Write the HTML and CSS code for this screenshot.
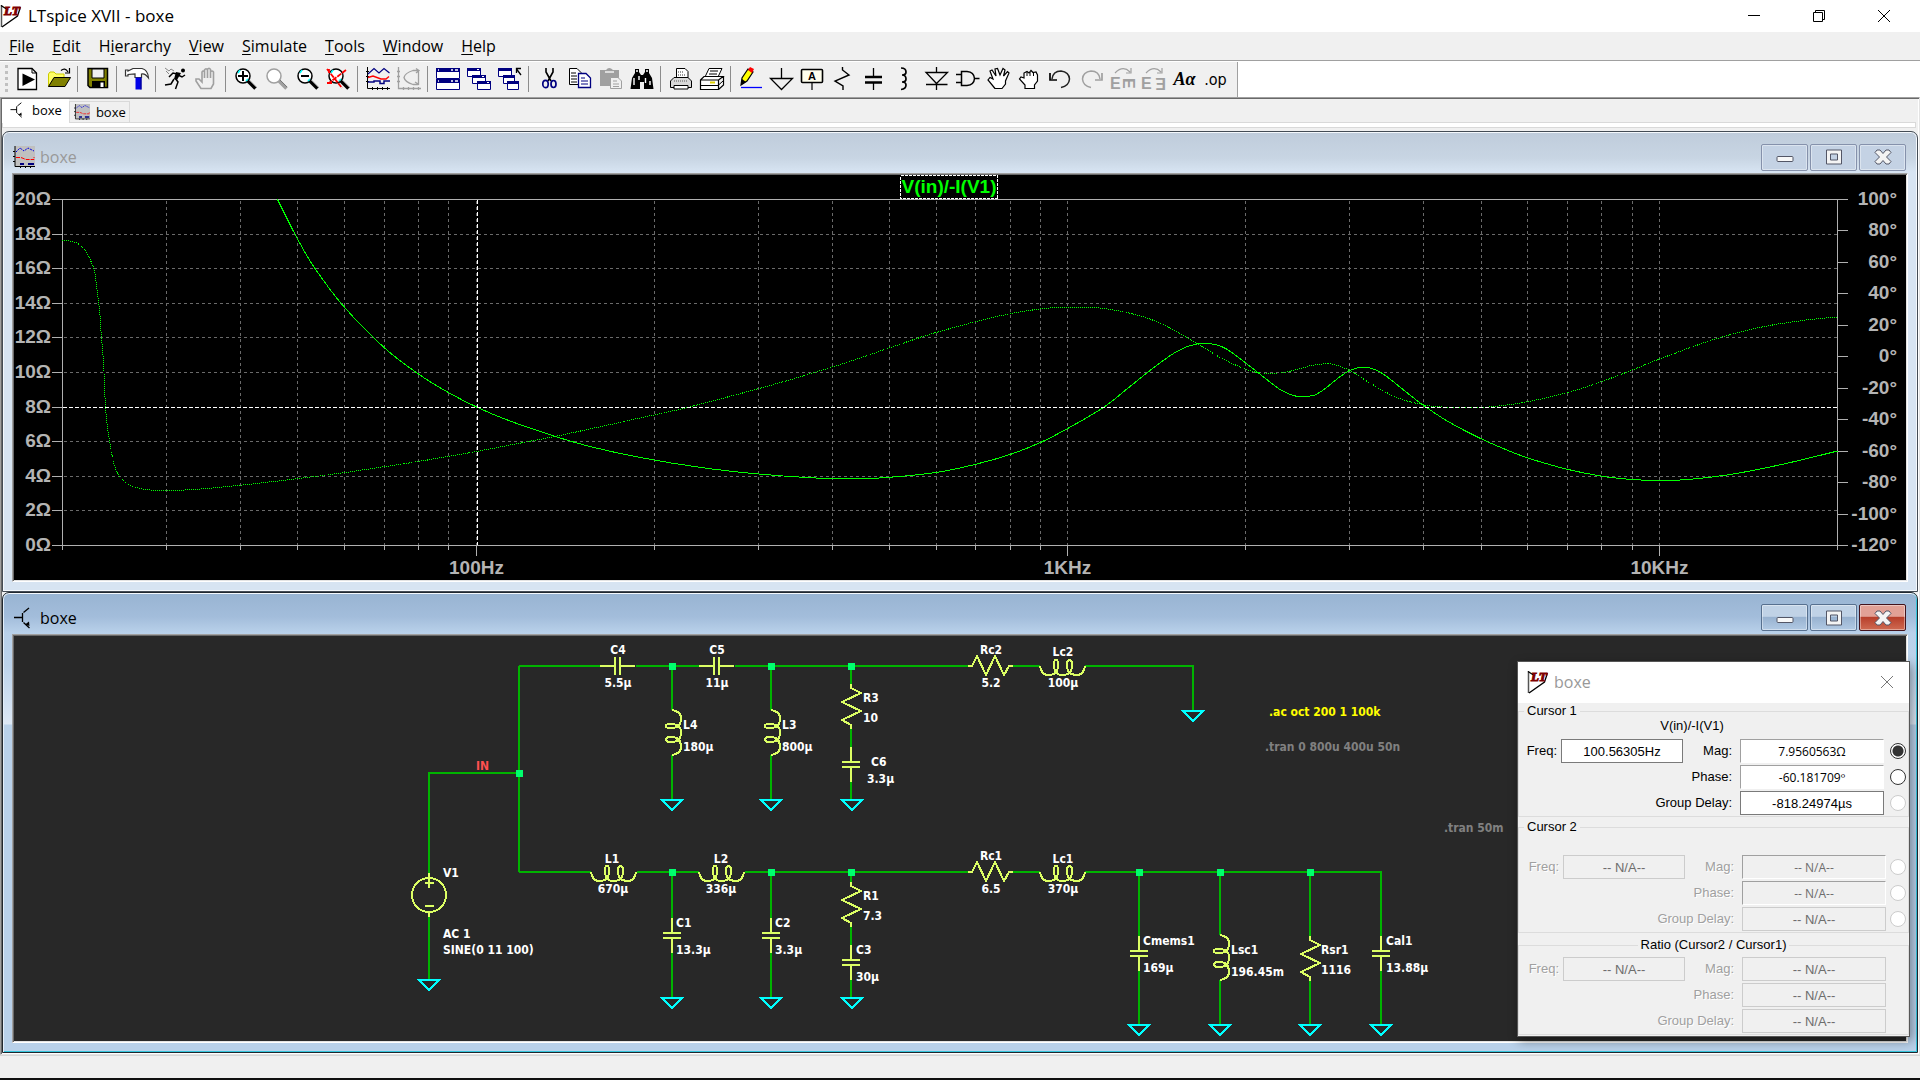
FILE: index.html
```html
<!DOCTYPE html>
<html lang="en">
<head>
<meta charset="utf-8">
<title>LTspice XVII - boxe</title>
<link rel="stylesheet" href="styles.css">
</head>
<body>
<svg class="defs" width="0" height="0" aria-hidden="true">
  <defs>
    <symbol id="logo" viewBox="0 0 22 24"><path d="M1.500 1V23" stroke="#555" stroke-width="1.500" fill="none"/><path d="M1 1.500L8 6M2 23L17.500 12L20.500 3" fill="none" stroke="#000" stroke-width="1.300"/><text x="4" y="11" class="logo-text">LT</text></symbol>
    <symbol id="bjt" viewBox="0 0 18 22"><path d="M0 10.500H9M8.500 6V15M9.500 5.500L15 1M9.500 15.500L15.500 21" fill="none" stroke="#000" stroke-width="1.300"/><path d="M11 17.500L15 14.500L15.500 19Z"/></symbol>
    <symbol id="wave" viewBox="0 0 22 22"><path d="M2 0H22V20H2Z" fill="#c0c0c0"/><path d="M2 0V20.500H22M0 5.500H2M0 10.500H2M0 15.500H2M7.500 20V22M12.500 20V22M17.500 20V22" fill="none" stroke="#000"/><path d="M3 6L7 2L11 5L15 2L21 5" fill="none" stroke="#0000e0" stroke-dasharray="2 1"/><path d="M3 11.500H8L13 13.500H21V11" fill="none" stroke="#f00" stroke-dasharray="4 1"/><path d="M7 18H11M15 18H21" stroke="#000080" stroke-width="2"/></symbol>
    <symbol id="g-min" viewBox="0 0 18 16"><rect x="1" y="7.500" width="16" height="5" rx="1" fill="#f8f8f8" stroke="#535666"/></symbol>
    <symbol id="g-max" viewBox="0 0 18 16"><path d="M1.500 1H16.500V15H1.500ZM5.500 5V11H12.500V5Z" fill="#f4f4f4" stroke="#535666" fill-rule="evenodd"/></symbol>
    <symbol id="g-close" viewBox="0 0 18 16"><path d="M3 1H6L9 4.500L12 1H15L17 3.500L12.500 8L17 12.500L15 15H12L9 11.500L6 15H3L1 12.500L5.500 8L1 3.500Z" fill="#f4f4f4" stroke="#535666"/></symbol>
    <symbol id="lens" viewBox="0 0 24 24"><circle cx="9" cy="9" r="7" fill="#fff" stroke="currentColor" stroke-width="1.500"/><path d="M14 14L21.500 21.500" stroke="currentColor" stroke-width="3.500"/><path d="M15 13L22 20" stroke="#777" stroke-width="1"/></symbol>
    <g id="cap"><path d="M0 0V15M0 20V35M-9 15H9M-9 20H9"/></g>
    <g id="res"><path d="M0 -1V3L10 8L-9 17L10 26L-9 35L0 40V44"/></g>
    <g id="coil"><path d="M0 0C1 6 4 9 8 9C14 9 18 7 18 -1C18 -8 14 -8 14 -1C14 6 17 9 22 9C28 9 32 7 32 -1C32 -8 27 -8 27 -1C27 7 32 9 37 9C41 9 44 6 45 0"/></g>
    <path id="gnd" d="M-10 0H10L0 10Z"/>
    <rect id="dot" x="-3" y="-3" width="7" height="7"/>
  </defs>
</svg>

<header class="titlebar">
  <svg class="app-logo" aria-hidden="true"><use href="#logo"/></svg>
  <h1>LTspice XVII - boxe</h1>
  <div class="sys">
    <button aria-label="Minimize"><svg viewBox="0 0 12 12"><path d="M0 5.500H12"/></svg></button>
    <button aria-label="Restore"><svg viewBox="0 0 12 12"><path d="M.5 2.500H9.500V11.500H.5ZM2.500 2V.5H11.500V9.500H10"/></svg></button>
    <button aria-label="Close"><svg viewBox="0 0 12 12"><path d="M0 0L12 12M12 0L0 12"/></svg></button>
  </div>
</header>

<nav class="menubar">
  <button><u>F</u>ile</button><button><u>E</u>dit</button><button>H<u>i</u>erarchy</button><button><u>V</u>iew</button><button><u>S</u>imulate</button><button><u>T</u>ools</button><button><u>W</u>indow</button><button><u>H</u>elp</button>
</nav>

<div class="toolrow">
  <div class="toolbar" role="toolbar" aria-label="Tools">
    <span class="grip"></span>
    <button aria-label="Run"><svg viewBox="0 0 24 24"><path d="M2 1.500H16L20.500 6V22.500H2Z" fill="#fff" stroke="#000" stroke-width="1.300"/><path d="M16 1.500V6H20.500" fill="none" stroke="#000"/><path d="M6.500 6.500L19 12.500L6.500 19Z"/></svg></button>
    <button aria-label="Open"><svg viewBox="0 0 24 24"><path d="M1.500 19.500V7L3 5H7L9 7H17V10.500H8Z" fill="#ff6" stroke="#cc0"/><path d="M1.500 19.500L7 10.500H23.500L18 19.500Z" fill="#808000" stroke="#000"/><path d="M14 3.500Q18 0 21 5M22.500 1V6H18" fill="none" stroke="#000" stroke-width="1.200"/></svg></button>
    <i></i>
    <button aria-label="Save"><svg viewBox="0 0 24 24"><path d="M2 1.500H21.500V20.500H4L2 18.500Z" fill="#808000" stroke="#000" stroke-width="1.500"/><path d="M6 2H18V11H6Z" fill="#f0f0f0" stroke="#000"/><path d="M6 14H19V21H6Z"/><path d="M14.500 15.500H17.500V20H14.500Z" fill="#fff"/></svg></button>
    <i></i>
    <button aria-label="Control panel"><svg viewBox="0 0 24 24"><path d="M.5 5.500V3H3V4L8 1.500H17Q23 3 23.500 11Q20 6 16.500 7V10.500H10V7L3 7.500V9H.5Z" fill="#fff" stroke="#333" stroke-width="1.200"/><path d="M10.500 10.500H16.500V22.500H10.500Z" fill="#0000e8"/><path d="M16 10.500V22.500" stroke="#000080"/></svg></button>
    <i></i>
    <button aria-label="Simulate"><svg viewBox="0 0 24 24"><path d="M13 7L9 6L5 10M14 8L18 10L21 8M11 11L14 15L11.500 22M10 12L7 17L1 18" fill="none" stroke="#000" stroke-width="1.500"/><path d="M12 5L17 6L13 13L10 12Z"/><circle cx="19" cy="3.500" r="2"/><path d="M1 1L5 4L7 2L10 4M2 4L5 7" fill="none" stroke="#888"/></svg></button>
    <button class="off" aria-label="Halt"><svg viewBox="0 0 24 24"><path d="M6 21.500L1 14V12H4L7 15V5Q8 3 9.500 5V11V3Q11 .5 12.500 3V11V2.500Q14 0 15.500 2.500V11V5Q17 3 18.500 5V17L16 21.500Z" fill="#f0f0f0" stroke="#a0a0a0" stroke-width="1.600"/></svg></button>
    <i></i>
    <button aria-label="Zoom in"><svg viewBox="0 0 24 24"><use href="#lens"/><path d="M4 9H14M9 4V14" stroke="#000" stroke-width="2"/><path d="M4 6L6 3M12 14L14 12" stroke="#0ff" stroke-width="1.500"/></svg></button>
    <button class="off" aria-label="Zoom back"><svg viewBox="0 0 24 24"><use href="#lens"/></svg></button>
    <button aria-label="Zoom out"><svg viewBox="0 0 24 24"><use href="#lens"/><path d="M5 9H13" stroke="#000" stroke-width="2"/><path d="M4 6L6 3M12 14L14 12" stroke="#0ff" stroke-width="1.500"/></svg></button>
    <button aria-label="Zoom full"><svg viewBox="0 0 24 24"><use href="#lens"/><path d="M4 6L6 3M12 14L14 12" stroke="#0ff" stroke-width="1.500"/><path d="M0 2L15 21M19 3L2 16M2 2V6M0 16H6" fill="none" stroke="#f00" stroke-width="1.800" stroke-dasharray="5 1"/></svg></button>
    <i></i>
    <button aria-label="Autorange"><svg viewBox="0 0 24 24"><path d="M1.500 0V21.500H24M0 4.500H3M0 9.500H3M0 14.500H3M6.500 20V23M11.500 20V23M16.500 20V23M21.500 20V23" fill="none" stroke="#000"/><path d="M2 7L8 1.500L13 6L18 1.500L23.500 6" fill="none" stroke="#000080" stroke-width="1.200"/><path d="M2 10.500L7 9L15 12H20L23 9.500" fill="none" stroke="#f00" stroke-width="1.400"/><path d="M2 15H8V14H14V16.500H18V14H24" fill="none" stroke="#000080" stroke-width="1.500"/></svg></button>
    <button class="off" aria-label="Pick traces"><svg viewBox="0 0 24 24"><path d="M1.500 0V21.500H24M0 4.500H3M0 9.500H3M0 14.500H3M6.500 20V23M11.500 20V23M16.500 20V23M21.500 20V23M21.500 3.500H16Q8 6 7 10.500Q8 15 16 17.500H21.500M19 1.500L22 3.500L19 6M21.500 3V18M18 15L22 17.500" fill="none" stroke="#a0a0a0" stroke-width="1.300"/></svg></button>
    <i></i>
    <button aria-label="Tile"><svg viewBox="0 0 24 24"><path d="M.5 1.500H23.500V11.500H.5ZM.5 12.500H23.500V22.500H.5Z" fill="#fff" stroke="#000080"/><path d="M0 1H24V5H0ZM0 12H24V16H0Z" fill="#000080"/><path d="M15 3H17M19 3H22M2 3H3M15 14H17M19 14H22M2 14H3" stroke="#fff" stroke-width="1.500"/></svg></button>
    <button aria-label="Cascade"><svg viewBox="0 0 24 24"><g fill="#fff" stroke="#000080"><path d="M.5 1.500H13.500V9.500H.5ZM5.500 8.500H18.500V16.500H5.500ZM10.500 14.500H23.500V22.500H10.500Z"/></g><path d="M0 1H14V4H0ZM5 8H19V11H5ZM10 14H24V17H10Z" fill="#000080"/><path d="M10 2.500H12M15 9.500H17M20 15.500H22" stroke="#fff"/></svg></button>
    <button aria-label="Close all"><svg viewBox="0 0 24 24"><g fill="#fff" stroke="#000080"><path d="M.5 1.500H13.500V9.500H.5ZM5.500 8.500H16.500V16.500H5.500ZM9.500 14.500H20.500V22.500H9.500Z"/></g><path d="M0 1H14V4H0ZM5 8H17V11H5ZM9 14H21V17H9Z" fill="#000080"/><path d="M23 8L18.500 2M18.500 6V1.500H23" fill="none" stroke="#000" stroke-width="1.300"/></svg></button>
    <i></i>
    <button aria-label="Cut"><svg viewBox="0 0 24 24"><path d="M9 1V5L14 14M16 1V5L11 14" fill="none" stroke="#000" stroke-width="1.600"/><ellipse cx="8.500" cy="17" rx="2.700" ry="3.700" fill="none" stroke="#000080" stroke-width="1.700"/><ellipse cx="16.500" cy="17" rx="2.500" ry="3.500" fill="none" stroke="#000080" stroke-width="1.700"/></svg></button>
    <button aria-label="Copy"><svg viewBox="0 0 24 24"><path d="M1.500 1.500H9L13 5.500V17.500H1.500Z" fill="#fff" stroke="#000"/><path d="M3 6H8M3 9H9M3 12H9M3 15H9" stroke="#000"/><path d="M10.500 6.500H18L22.500 11V20.500H10.500Z" fill="#fff" stroke="#000080" stroke-width="1.300"/><path d="M13 11H17M13 14H20M13 17H20" stroke="#000080"/></svg></button>
    <button class="off" aria-label="Paste"><svg viewBox="0 0 24 24"><path d="M1 3H7Q10 -1 14 3H20V19H1Z" fill="#a0a0a0"/><path d="M6 5H15" stroke="#f0f0f0" stroke-width="1.500"/><path d="M11.500 10.500H19L22.500 14V21.500H11.500Z" fill="#f0f0f0" stroke="#a0a0a0"/><path d="M14 14H18M14 17H20M14 19.500H20" stroke="#a0a0a0"/></svg></button>
    <button aria-label="Find"><svg viewBox="0 0 24 24"><path d="M5 2H9V5L11 8H13L15 5V2H19V6L22 11L23.500 22H14V15H10V22H.5L2 11L5 6Z"/><path d="M6 4H8M16 4H18M4 11V18M9 9V13M15.500 11V16M20 14V18" stroke="#fff" stroke-width="1.400"/></svg></button>
    <i></i>
    <button aria-label="Print"><svg viewBox="0 0 24 24"><path d="M7.500 12V1.500H16L19 4.500V12" fill="#fff" stroke="#000"/><path d="M1.500 14L5 10.500H19L22.500 14V20.500H1.500Z" fill="#d8d8d8" stroke="#000"/><path d="M5 18.500H19V22H5Z" fill="#fff" stroke="#000"/><path d="M9 5H15M9 8H17M5 14H19" stroke="#999" stroke-dasharray="1 1" stroke-width="2"/></svg></button>
    <button aria-label="Print setup"><svg viewBox="0 0 24 24"><path d="M5 10L9 1.500H22L18 10Z" fill="#fff" stroke="#000"/><path d="M10 4H18M9 7H17" stroke="#000"/><path d="M.5 13L4 9.500H23L18.500 13V22.500H.5ZM18.500 13H.5M18.500 22.500L23.500 18V9.500" fill="#fff" stroke="#000" stroke-width="1.200"/><path d="M1 18.500H18L23 14" fill="none" stroke="#000"/><path d="M10 15.500H15" stroke="#e0d000" stroke-width="2"/></svg></button>
    <i></i>
    <button aria-label="Wire"><svg viewBox="0 0 24 24"><path d="M2 18L3 11L9 2L14 5L8 14Z" fill="#ff0" stroke="#000" stroke-width="1.200"/><path d="M2 18L3 12L7 15Z"/><path d="M9 3L11 0L15 2L13 6Z" fill="#f00"/><path d="M2 20.500H23" stroke="#00f" stroke-width="1.300"/></svg></button>
    <button aria-label="Ground"><svg viewBox="0 0 24 24"><path d="M11.500 1V12M.5 11.500H22.500L11.500 22.500Z" fill="none" stroke="#000" stroke-width="1.300"/></svg></button>
    <button aria-label="Label net"><svg viewBox="0 0 24 24"><rect x="0.500" y="2.500" width="21" height="13" rx="1" fill="#ffe" stroke="#000" stroke-width="1.600"/><path d="M11 16V23" stroke="#000" stroke-width="1.200"/><text x="11" y="13" text-anchor="middle" class="ico-a">A</text></svg></button>
    <button aria-label="Resistor"><svg viewBox="0 0 24 24"><path d="M10.500 0V3L17 8L3 14L11 19V23" fill="none" stroke="#000" stroke-width="1.400"/></svg></button>
    <button aria-label="Capacitor"><svg viewBox="0 0 24 24"><path d="M10.500 1V10M10.500 15V23" stroke="#000" stroke-width="1.300"/><path d="M2 10H19M2 15.500H19" stroke="#000" stroke-width="2.400"/></svg></button>
    <button aria-label="Inductor"><svg viewBox="0 0 24 24"><path d="M7 1Q12 1 12 5Q12 8 8 8Q12 8 12 12Q12 15 8 15Q12 15 12 18Q12 22 7 22.500" fill="none" stroke="#000" stroke-width="1.700"/></svg></button>
    <button aria-label="Diode"><svg viewBox="0 0 24 24"><path d="M11.500 0V6M1 5.500H22.500L11.500 16.500ZM1 17.500H22.500M11.500 17V23" fill="none" stroke="#000" stroke-width="1.300"/></svg></button>
    <button aria-label="Component"><svg viewBox="0 0 24 24"><path d="M5.500 4.500H11Q18 5 18.500 11.500Q18 18 11 18.500H5.500ZM0 7.500H5M0 15.500H5M19 11.500H23.500" fill="none" stroke="#000" stroke-width="1.500"/></svg></button>
    <button aria-label="Move"><svg viewBox="0 0 24 24"><path d="M8 21.500L1 13L3 10.500L6 12L3 4L5 3L9 9L8 2L10.500 1.500L13 8L16 1.500L18 3L16.500 9L20.500 4.500L22 6L18.500 14V17L15 21.500Z" fill="#fff" stroke="#000" stroke-width="1.200"/></svg></button>
    <button aria-label="Drag"><svg viewBox="0 0 24 24"><path d="M7 21.500V18L1.500 12L3 10L6 11V6L9 4.500L11 6L13 3.500L15 5.500L18 5L19.500 8V14L16.500 18V21.500Z" fill="#fff" stroke="#000" stroke-width="1.200"/><path d="M9 5V9M12 5V9M15.500 6V9" stroke="#000"/></svg></button>
    <button aria-label="Undo"><svg viewBox="0 0 24 24"><path d="M3 12Q4 4 12 4Q20 5 20.500 12Q20 19 12 20.500" fill="none" stroke="#222" stroke-width="1.500"/><path d="M1 6V13H8" fill="none" stroke="#000" stroke-width="1.700"/></svg></button>
    <button class="off" aria-label="Redo"><svg viewBox="0 0 24 24"><path d="M20 12Q19 4 11 4Q3 5 2.500 12Q3 19 11 20.500" fill="none" stroke="#a0a0a0" stroke-width="1.500"/><path d="M22 6V13H15" fill="none" stroke="#a0a0a0" stroke-width="1.700"/></svg></button>
    <button class="off" aria-label="Rotate"><svg viewBox="0 0 24 24"><path d="M4 6Q12 -2 19 5M20 1V6H15" fill="none" stroke="#a0a0a0" stroke-width="1.200"/><text x="-1" y="22" class="ico-e">E</text><text class="ico-e" transform="translate(12 11) rotate(90)">E</text></svg></button>
    <button class="off" aria-label="Mirror"><svg viewBox="0 0 24 24"><path d="M4 6Q12 -2 19 5M20 1V6H15" fill="none" stroke="#a0a0a0" stroke-width="1.200"/><text x="-1" y="22" class="ico-e">E</text><text class="ico-e" transform="translate(24 11) rotate(180)">E</text></svg></button>
    <button class="tool-text serif">Aα</button>
    <button class="tool-text">.op</button>
  </div>
</div>

<main class="workspace">
  <div class="tabs" role="tablist">
    <button class="tab active" role="tab"><svg class="tab-icon" aria-hidden="true"><use href="#bjt"/></svg>boxe</button>
    <button class="tab" role="tab"><svg class="tab-icon" aria-hidden="true"><use href="#wave"/></svg>boxe</button>
  </div>
  <div class="tab-strip"></div>

  <section class="mdi">
    <div class="caption">
      <svg class="cap-icon" aria-hidden="true"><use href="#wave"/></svg><h2>boxe</h2>
      <div class="cap-buttons">
        <button aria-label="Minimize"><svg><use href="#g-min"/></svg></button>
        <button aria-label="Maximize"><svg><use href="#g-max"/></svg></button>
        <button aria-label="Close"><svg><use href="#g-close"/></svg></button>
      </div>
    </div>
    <div class="client plot">
      <svg id="plot" viewBox="14 175 1892 405" role="img" aria-label="V(in)/-I(V1) magnitude and phase">
        <path id="grid" class="grid"/>
        <path id="axes" class="axes"/>
        <path id="phase" class="trace dotted"/>
        <path id="mag" class="trace"/>
        <path class="cursor-line" d="M63 407.500H1837M477.500 200V545"/>
        <g id="labels" class="axis-text"></g>
        <rect class="trace-box" x="900.500" y="175.500" width="97" height="23"/>
        <text class="trace-name" x="949" y="193" text-anchor="middle">V(in)/-I(V1)</text>
      </svg>
    </div>
  </section>

  <section class="mdi current">
    <div class="caption">
      <svg class="cap-icon" aria-hidden="true"><use href="#bjt"/></svg><h2>boxe</h2>
      <div class="cap-buttons">
        <button aria-label="Minimize"><svg><use href="#g-min"/></svg></button>
        <button aria-label="Maximize"><svg><use href="#g-max"/></svg></button>
        <button class="close" aria-label="Close"><svg><use href="#g-close"/></svg></button>
      </div>
    </div>
    <div class="client schematic">
      <svg viewBox="14 636 1892 405" role="img" aria-label="Crossover schematic">
        <path class="wire" d="M429 873V773H519M519 666V872M429 917V979M519 666H600M636 666H699M735 666H968M1013 666H1040M1085 666H1193V710M519 872H591M637 872H699M745 872H968M1013 872H1040M1085 872H1381V936
          M672 666V710M672 755V799M771 666V710M771 755V799M851 666V685M851 729V747M851 782V799
          M672 872V918M672 953V998M771 872V918M771 953V998M851 872V883M851 926V945M851 980V998
          M1139 872V936M1139 971V1025M1220 872V935M1220 980V1025M1310 872V936M1310 980V1025M1381 971V1025"/>
        <g class="part">
          <circle cx="429" cy="895" r="17"/>
          <path d="M429 873V888M425 883H434M425 906H434M429 912V917"/>
          <use href="#cap" transform="translate(600 666) rotate(-90)"/>
          <use href="#cap" transform="translate(699 666) rotate(-90)"/>
          <use href="#cap" x="851" y="747"/><use href="#cap" x="672" y="918"/><use href="#cap" x="771" y="918"/>
          <use href="#cap" x="851" y="945"/><use href="#cap" x="1139" y="936"/><use href="#cap" x="1381" y="936"/>
          <use href="#res" x="851" y="685"/><use href="#res" x="851" y="883"/><use href="#res" x="1310" y="937"/>
          <use href="#res" transform="translate(969 666) rotate(-90)"/>
          <use href="#res" transform="translate(969 872) rotate(-90)"/>
          <use href="#coil" x="1040" y="666"/><use href="#coil" x="591" y="872"/><use href="#coil" x="699" y="872"/><use href="#coil" x="1040" y="872"/>
          <use href="#coil" transform="matrix(0 1 1 0 672 710)"/>
          <use href="#coil" transform="matrix(0 1 1 0 771 710)"/>
          <use href="#coil" transform="matrix(0 1 1 0 1220 935)"/>
        </g>
        <g class="ground">
          <use href="#gnd" x="429" y="980"/><use href="#gnd" x="672" y="800"/><use href="#gnd" x="771" y="800"/><use href="#gnd" x="852" y="800"/>
          <use href="#gnd" x="1193" y="711"/><use href="#gnd" x="672" y="998"/><use href="#gnd" x="771" y="998"/><use href="#gnd" x="852" y="998"/>
          <use href="#gnd" x="1139" y="1025"/><use href="#gnd" x="1220" y="1025"/><use href="#gnd" x="1310" y="1025"/><use href="#gnd" x="1381" y="1025"/>
        </g>
        <g class="node">
          <use href="#dot" x="519" y="773"/><use href="#dot" x="672" y="666"/><use href="#dot" x="771" y="666"/><use href="#dot" x="851" y="666"/>
          <use href="#dot" x="672" y="872"/><use href="#dot" x="771" y="872"/><use href="#dot" x="851" y="872"/>
          <use href="#dot" x="1139" y="872"/><use href="#dot" x="1220" y="872"/><use href="#dot" x="1310" y="872"/>
        </g>
        <g class="net mid">
          <text x="618" y="654">C4</text><text x="618" y="687">5.5µ</text>
          <text x="717" y="654">C5</text><text x="717" y="687">11µ</text>
          <text x="991" y="654">Rc2</text><text x="991" y="687">5.2</text>
          <text x="1063" y="656">Lc2</text><text x="1063" y="687">100µ</text>
          <text x="612" y="863">L1</text><text x="613" y="893">670µ</text>
          <text x="721" y="863">L2</text><text x="721" y="893">336µ</text>
          <text x="991" y="860">Rc1</text><text x="991" y="893">6.5</text>
          <text x="1063" y="863">Lc1</text><text x="1063" y="893">370µ</text>
        </g>
        <g class="net">
          <text x="683" y="729">L4</text><text x="683" y="751">180µ</text>
          <text x="782" y="729">L3</text><text x="782" y="751">800µ</text>
          <text x="863" y="702">R3</text><text x="863" y="722">10</text>
          <text x="871" y="766">C6</text><text x="867" y="783">3.3µ</text>
          <text x="676" y="927">C1</text><text x="676" y="954">13.3µ</text>
          <text x="775" y="927">C2</text><text x="775" y="954">3.3µ</text>
          <text x="863" y="900">R1</text><text x="863" y="920">7.3</text>
          <text x="856" y="954">C3</text><text x="856" y="981">30µ</text>
          <text x="1143" y="945">Cmems1</text><text x="1143" y="972">169µ</text>
          <text x="1231" y="954">Lsc1</text><text x="1231" y="976">196.45m</text>
          <text x="1321" y="954">Rsr1</text><text x="1321" y="974">1116</text>
          <text x="1386" y="945">Cal1</text><text x="1386" y="972">13.88µ</text>
          <text x="443" y="877">V1</text><text x="443" y="938">AC 1</text><text x="443" y="954">SINE(0 11 100)</text>
          <text x="476" y="770" class="net-name">IN</text>
          <text x="1269" y="716" class="directive">.ac oct 200 1 100k</text>
          <text x="1265" y="751" class="remark">.tran 0 800u 400u 50n</text>
          <text x="1444" y="832" class="remark">.tran 50m</text>
        </g>
      </svg>
    </div>

    <aside class="dialog" role="dialog" aria-label="boxe">
      <div class="dialog-title">
        <svg class="app-logo" aria-hidden="true"><use href="#logo"/></svg><h3>boxe</h3>
        <button aria-label="Close"><svg viewBox="0 0 12 12"><path d="M0 0L12 12M12 0L0 12"/></svg></button>
      </div>
      <fieldset>
        <legend>Cursor 1</legend>
        <p class="expr">V(in)/-I(V1)</p>
        <div class="fields">
          <label for="f1">Freq:</label><input id="f1" value="100.56305Hz">
          <label for="m1">Mag:</label><input id="m1" class="sunk" value="7.9560563Ω"><input type="radio" name="c1" checked aria-label="Mag">
          <label class="wide" for="p1">Phase:</label><input id="p1" class="sunk" value="-60.181709º"><input type="radio" name="c1" aria-label="Phase">
          <label class="wide" for="g1">Group Delay:</label><input id="g1" value="-818.24974µs"><input type="radio" name="c1" disabled aria-label="Group delay">
        </div>
      </fieldset>
      <fieldset class="idle">
        <legend>Cursor 2</legend>
        <p class="expr"></p>
        <div class="fields">
          <label for="f2">Freq:</label><input id="f2" value="-- N/A--" disabled>
          <label for="m2">Mag:</label><input id="m2" class="sunk" value="-- N/A--" disabled><input type="radio" name="c2" disabled aria-label="Mag">
          <label class="wide" for="p2">Phase:</label><input id="p2" class="sunk" value="-- N/A--" disabled><input type="radio" name="c2" disabled aria-label="Phase">
          <label class="wide" for="g2">Group Delay:</label><input id="g2" value="-- N/A--" disabled><input type="radio" name="c2" disabled aria-label="Group delay">
        </div>
      </fieldset>
      <fieldset class="idle ratio">
        <legend>Ratio (Cursor2 / Cursor1)</legend>
        <div class="fields">
          <label for="f3">Freq:</label><input id="f3" value="-- N/A--" disabled>
          <label for="m3">Mag:</label><input id="m3" value="-- N/A--" disabled><span></span>
          <label class="wide" for="p3">Phase:</label><input id="p3" value="-- N/A--" disabled><span></span>
          <label class="wide" for="g3">Group Delay:</label><input id="g3" value="-- N/A--" disabled><span></span>
        </div>
      </fieldset>
    </aside>
  </section>
</main>
<footer class="statusbar"></footer>
<script src="plot.js"></script>
</body>
</html>
```
FILE: styles.css
```css
* { box-sizing: border-box; margin: 0; }
html, body { height: 100%; }
body {
  display: flex;
  flex-direction: column;
  background: #f0f0f0;
  color: #000;
  font-family: "Open Sans", "Noto Sans", sans-serif;
  font-size: 16px;
}
button { border: 0; padding: 0; background: none; font: inherit; color: inherit; }
h1, h2, h3 { font-size: 16px; font-weight: 400; line-height: 24px; }
h1 { font-size: 17px; }
.defs { position: absolute; }

.titlebar { flex: none; height: 32px; display: flex; align-items: center; gap: 6px; padding-right: 4px; background: #fff; }
.app-logo { width: 22px; height: 24px; flex: none; }
.logo-text { font: italic 700 13px "Liberation Serif", serif; fill: #800000; stroke: #800000; stroke-width: 1px; }
.sys { margin-left: auto; display: flex; }
.sys button { width: 65px; height: 30px; }
.sys svg { width: 12px; height: 12px; fill: none; stroke: #000; overflow: visible; }

.menubar { flex: none; height: 29px; display: flex; border-bottom: 1px solid #a0a0a0; }
.menubar button { padding: 0 9px; line-height: 28px; }
.menubar u { text-underline-offset: 2px; }

.toolrow { flex: none; height: 36px; background: #fff; padding-top: 1px; }
.toolbar { width: max-content; height: 35px; display: flex; align-items: center; background: #f0f0f0; border-right: 1px solid #a0a0a0; padding: 0 6px 1px 5px; }
.grip { width: 3px; height: 28px; margin-right: 4px; background: repeating-linear-gradient(#c0c0c0 0 3px, #f0f0f0 3px 6px); }
.toolbar button { width: 31px; height: 34px; display: flex; align-items: center; justify-content: center; color: #000; }
.toolbar button svg { width: 24px; height: 24px; overflow: visible; }
.toolbar button.off { color: #a0a0a0; }
.toolbar i { width: 8px; height: 26px; background: linear-gradient(#8c8c8c, #8c8c8c) 3px 0 / 1px 100% no-repeat; }
.ico-a { font: 700 11px "Liberation Sans", sans-serif; }
.ico-e { font: 700 16px "Liberation Sans", sans-serif; fill: #a0a0a0; }
.toolbar .tool-text { font: 16px "DejaVu Sans Condensed", sans-serif; }
.toolbar .serif { font: italic 700 18px "Liberation Serif", serif; }

.workspace {
  flex: 1;
  min-height: 0;
  display: flex;
  flex-direction: column;
  border: 1px solid #a0a0a0;
  border-color: #a0a0a0 #e3e3e3 #e3e3e3 #a0a0a0;
  box-shadow: inset 1px 1px #696969, inset -1px -1px #fff;
  padding: 1px;
}
.tabs { flex: none; height: 24px; display: flex; align-items: flex-end; font-size: 13px; position: relative; z-index: 1; }
.tab { height: 22px; display: flex; align-items: center; gap: 6px; padding: 0 3px 2px 4px; border: 1px solid #d9d9d9; border-bottom: 0; }
.tab.active { height: 24px; padding: 0 6px 4px 7px; background: #fff; border-color: #fff; gap: 8px; }
.tab-icon { width: 16px; height: 16px; flex: none; }
.active .tab-icon { width: 14px; }
.tab-strip { flex: none; height: 6px; background: #fff; border: 1px solid #d9d9d9; margin: -1px 2px 3px 0; }

.mdi {
  flex: 1 1 0;
  min-height: 0;
  position: relative;
  display: flex;
  flex-direction: column;
  padding: 1px 9px 9px;
  border: 1px solid #444c55;
  border-radius: 7px 7px 0 0;
  background: linear-gradient(#bfccdb, #c8d5e3 26px, #d7e4f2 40px);
  box-shadow: inset 0 0 0 1px #f4f8fc;
}
.mdi.current {
  border-color: #20272e;
  background: linear-gradient(#98b4d2, #a3bddb 24px, #b9d1ea 40px, #bcd3eb 72px, #dde8f5 131px, #b9d1ea 132px);
  box-shadow: inset 0 1px #f4f8fc, inset 1px 0 #e4eef8, inset 0 -1px #35c5dc, inset -1px 0 #35c5dc;
}
.caption { flex: none; height: 40px; display: flex; align-items: center; gap: 5px; padding: 8px 2px 0 1px; color: #999; }
.current .caption { color: #000; padding-top: 7px; }
.cap-icon { width: 22px; height: 22px; flex: none; }
.current .cap-icon { width: 18px; margin: 0 3px 0 1px; }
.cap-buttons { margin-left: auto; display: flex; gap: 2px; }
.cap-buttons button { width: 47px; height: 27px; display: flex; align-items: center; justify-content: center; border: 1px solid #8591ab; border-radius: 2px; box-shadow: inset 0 0 0 1px rgba(255, 255, 255, .4); background: #c4d2e4; }
.cap-buttons svg { width: 18px; height: 16px; }
.current .cap-buttons button { border-color: #57708f; background: linear-gradient(#c0d2e6 45%, #98b2d0 50%, #b2cae4); }
.current .cap-buttons .close { border-color: #43131c; background: linear-gradient(#e2a196 45%, #b8402c 50%, #cf6b52); }

.client { flex: 1; min-height: 0; border: 1px solid #a0a0a0; border-color: #a0a0a0 #fff #fff #a0a0a0; box-shadow: inset 1px 1px #696969, inset -1px -1px #e3e3e3; padding: 1px; }
.client svg { display: block; width: 100%; height: 100%; }
.plot { background: #000; }
.schematic { background: #282828; }

.grid, .axes, .trace, .cursor-line, .trace-box, .wire, .part, .ground, .node { fill: none; shape-rendering: crispEdges; }
.grid { stroke: #6a6a6a; stroke-dasharray: 3 3; }
.axes { stroke: #b0b0b0; }
.trace { stroke: #0f0; }
.dotted { stroke-dasharray: 1 1; }
.cursor-line { stroke: #fff; stroke-dasharray: 4 2; }
.trace-box { stroke: #fff; stroke-dasharray: 3 1; }
.axis-text, .trace-name { font: 700 19px "Liberation Sans", sans-serif; fill: #b4b4b4; }
.trace-name { fill: #0f0; }

.wire { stroke: #00b400; stroke-width: 2; }
.part { stroke: #dcff64; stroke-width: 2; }
.ground { stroke: #0ff; stroke-width: 2; }
.node { fill: #00ff6e; }
.net { font: 700 12px "DejaVu Sans Condensed", "DejaVu Sans", sans-serif; fill: #fff; }
.mid { text-anchor: middle; }
.net-name { fill: #ff5050; }
.directive { fill: #ff0; }
.remark { fill: #808080; }

.dialog {
  position: absolute;
  right: 7px;
  bottom: 15px;
  width: 393px;
  border: 1px solid #565656;
  background: #f0f0f0;
  box-shadow: 2px 4px 10px rgba(0, 0, 0, .4);
  font: 13px/16px "Liberation Sans", sans-serif;
  padding-bottom: 1px;
}
.dialog-title { height: 41px; display: flex; align-items: center; gap: 5px; padding: 0 16px 2px 9px; background: #fff; color: #999; font-family: "Open Sans", "Noto Sans", sans-serif; }
.dialog-title button { margin-left: auto; display: flex; }
.dialog-title button svg { width: 12px; height: 12px; stroke: #777; overflow: visible; }
fieldset { min-width: 0; border: 1px solid #dcdcdc; padding: 0 0 1px; margin-bottom: 2px; }
legend { margin-left: 5px; padding: 0 3px; }
.expr { height: 20px; line-height: 14px; width: 346px; text-align: center; }
.fields { display: grid; grid-template-columns: 41px 122px 57px 144px 16px; row-gap: 2px; align-items: center; padding-left: 1px; }
.fields label { padding-right: 4px; text-align: right; white-space: nowrap; }
.fields .wide { grid-column: 1 / 4; }
.fields label:nth-of-type(n+2) { padding-right: 8px; }
.fields input:not([type]) { width: 100%; height: 24px; border: 1px solid #7a7a7a; background: #fff; padding: 0; text-align: center; font: inherit; color: #000; }
.fields .sunk:not([type]) { border-color: #a0a0a0 #fff #fff #a0a0a0; font: 12px "Open Sans", "Noto Sans", sans-serif; }
.fields input[type="radio"] { appearance: none; width: 16px; height: 16px; margin: 0 0 0 6px; border: 1px solid #333; border-radius: 50%; background: #fff; }
.fields input[type="radio"]:checked { background: radial-gradient(circle, #333 5px, #fff 6px); }
.fields input[type="radio"]:disabled { border-color: #ccc; }
.idle .fields { padding-left: 3px; }
.idle label { color: #a0a0a0; text-shadow: 1px 1px #fff; }
.idle .fields input:not([type]) { background: #f0f0f0; color: #6d6d6d; border-color: #ccc; }
.idle .fields .sunk:not([type]) { border-color: #a0a0a0 #fff #fff #a0a0a0; }
.idle .fields input[type="radio"] { margin-left: 4px; }
.ratio { margin: 4px 0 0; }
.ratio legend { margin: 0 auto; }
.ratio .fields { padding-top: 4px; }

.statusbar { flex: none; height: 25px; border-top: 1px solid #d7d7d7; border-bottom: 2px solid #101010; }
```
FILE: plot.js
```js
// Log frequency axis: 20 Hz to 20 kHz. Left axis 0..20 ohm, right axis -120..100 degrees.
const LEFT = 62, RIGHT = 1837, TOP = 199, BOTTOM = 545, DECADE = 591.6;
const xOf = f => Math.round(LEFT + DECADE * Math.log10(f / 20)) + 0.5;
const set = (id, d) => document.getElementById(id).setAttribute('d', d);

let grid = '', axes = `M52 ${TOP}.5H1848M52 ${BOTTOM}.5H1848M${LEFT}.5 ${TOP}V550M${RIGHT}.5 ${TOP}V550`;
let labels = '';
for (const base of [10, 100, 1000, 10000]) {
  for (let k = 1; k < 10; k++) {
    const f = base * k;
    if (f <= 20 || f >= 20000) continue;
    const x = xOf(f);
    grid += `M${x} 201V545`;
    axes += `M${x} 545V${k === 1 ? 556 : 550}`;
    if (k === 1) {
      const name = f < 1000 ? f + 'Hz' : f / 1000 + 'KHz';
      labels += `<text x="${x}" y="574" text-anchor="middle">${name}</text>`;
    }
  }
}
for (let i = 0; i <= 10; i++) {
  const y = Math.round(TOP + 34.6 * i);
  if (i && i < 10) { grid += `M64 ${y}.5H1837`; axes += `M52 ${y}.5H62`; }
  labels += `<text x="51" y="${y + 6}" text-anchor="end">${20 - 2 * i}Ω</text>`;
}
for (let i = 0; i <= 11; i++) {
  const y = Math.round(TOP + 31.45 * i);
  axes += `M1838 ${y}.5H1848`;
  labels += `<text x="1897" y="${y + 6}" text-anchor="end">${100 - 20 * i}°</text>`;
}
set('grid', grid);
set('axes', axes);
document.getElementById('labels').innerHTML = labels;

// Catmull-Rom spline through the sampled points
function spline(p) {
  let d = `M${p[0]} ${p[1]}`;
  const n = p.length / 2, at = i => { const j = Math.max(0, Math.min(n - 1, i)); return [p[2 * j], p[2 * j + 1]]; };
  for (let i = 0; i < n - 1; i++) {
    const [a, b, c, e] = [at(i - 1), at(i), at(i + 1), at(i + 2)];
    d += `C${b[0] + (c[0] - a[0]) / 6} ${b[1] + (c[1] - a[1]) / 6} ${c[0] - (e[0] - b[0]) / 6} ${c[1] - (e[1] - b[1]) / 6} ${c[0]} ${c[1]}`;
  }
  return d;
}
set('mag', spline([277.5,199.5, 297,238, 315,268.5, 344,306.7, 384,347.5, 418.4,374, 448,392.3, 477.5,407.5, 510,421, 557,437, 592,447, 640,457.5, 701,467.5, 758.5,474, 815.5,478, 848,478.5, 879.5,478, 936,472.5, 976.7,464, 1010,454.5, 1040,442.7, 1067.3,428.7, 1103.3,407.5, 1125.7,390, 1150,370.5, 1172.7,354, 1189,346, 1205.3,343.3, 1223.7,347.5, 1245.3,362.7, 1260.4,374.5, 1280,389.5, 1294,395.7, 1303.7,396.5, 1314.7,395, 1325,388.7, 1337,379, 1350,370.3, 1363.7,367.3, 1376,370, 1386,376, 1402.4,389, 1423,405, 1449.4,422.3, 1481,438.7, 1504.5,449, 1528,458, 1567.3,469.3, 1602.4,476.3, 1632,479.5, 1659.6,480.5, 1688,479.5, 1729,474.7, 1769.8,467, 1802.4,459.7, 1837.5,451]));
set('phase', spline([62.5,240.3, 67.5,240.5, 77.5,243.3, 85,250.5, 90.6,260.7, 94.7,271.7, 97,290, 99.6,311.7, 101.2,333.3, 103.7,366.7, 105.5,406.7, 108,431.7, 112,455, 114.3,465, 119.2,476, 128.6,484.3, 138.8,488.3, 153,490.3, 167.3,490.7, 179.6,490.3, 204,488.7, 240,485.3, 297,478.7, 344,472.7, 384,466.7, 418.4,461.5, 449,456.3, 477.5,451.3, 514,444.3, 557,436, 592,428.5, 640,418, 688,407.3, 758.4,388.7, 795,378.3, 832.2,367, 860.4,358, 889,348, 917.6,338.3, 936.3,332.5, 976.7,321.3, 1010.2,313.7, 1040,309, 1060.4,307.4, 1089,307.4, 1109.4,309.3, 1138,315.3, 1160.4,323.3, 1187,337.5, 1203.3,347.3, 1223.7,359.5, 1245.3,369, 1256.3,372.3, 1270.6,373.5, 1280,373, 1296.3,369.7, 1310.6,365.7, 1323,364, 1333,364.3, 1350.2,370.7, 1367.8,381.7, 1396.3,397.3, 1423,404.7, 1443,407, 1463.7,407.5, 1488,407, 1508.6,404.7, 1528,401.7, 1567.3,392.7, 1602.4,381.3, 1632.2,370, 1659.6,359, 1700.4,344, 1737,332.7, 1769.8,325.5, 1802.4,320.5, 1827,317.8, 1837.5,317.3]));
```
